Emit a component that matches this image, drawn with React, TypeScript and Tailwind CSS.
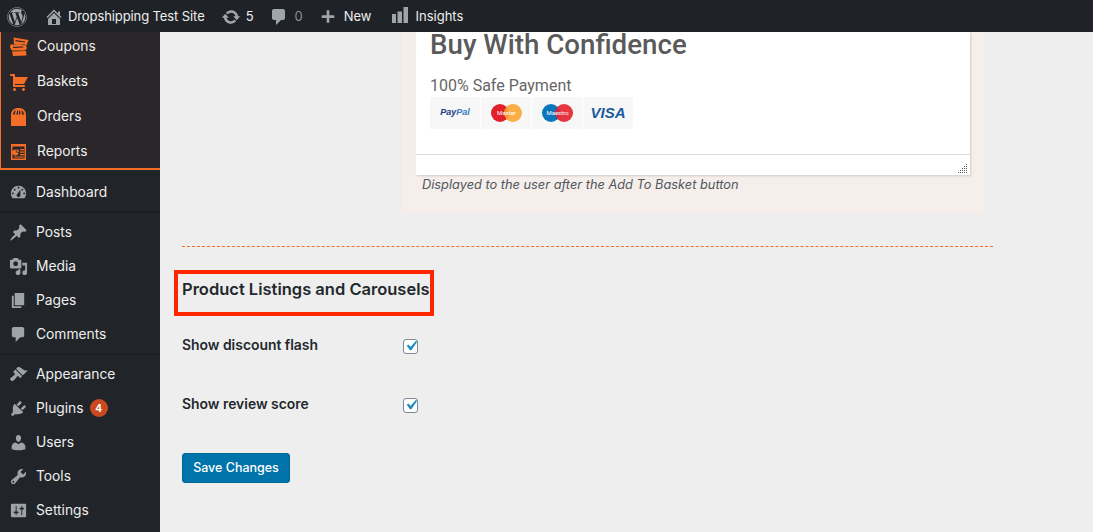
import type { ReactNode } from "react";
import { FaWordpress } from "react-icons/fa";

const paths: Record<string, string> = {
  home: "M16 8.5l1.53 1.53-1.06 1.06L10 4.62l-6.47 6.47-1.06-1.06L10 2.5l4 4v-2h2v4zm-6-2.46l6 5.99V18H4v-5.97zM12 17v-5H8v5h4z",
  update: "M10.2 3.28c3.53 0 6.43 2.61 6.92 6h2.08l-3.5 4-3.5-4h2.32c-.45-1.97-2.21-3.45-4.32-3.45-1.45 0-2.73.71-3.54 1.78L4.95 5.66C6.23 4.2 8.11 3.28 10.2 3.28zm-.4 13.44c-3.52 0-6.43-2.61-6.92-6H.8l3.5-4c1.17 1.33 2.33 2.67 3.5 4H5.48c.45 1.97 2.21 3.45 4.32 3.45 1.45 0 2.73-.71 3.54-1.78l1.71 1.95c-1.28 1.46-3.15 2.38-5.25 2.38z",
  comment: "M5 2h9c1.1 0 2 .9 2 2v7c0 1.1-.9 2-2 2h-2l-5 5v-5H5c-1.1 0-2-.9-2-2V4c0-1.1.9-2 2-2z",
  plus: "M17 8v3h-5.5v5.5h-3V11H3V8h5.5V2.5h3V8z",
  insights: "M2 7h4v9H2zM7.500 4.500h4.500V16H7.500zM13.500 0H18v16h-4.500z",
  cart: "M6 13h9c.55 0 1 .45 1 1s-.45 1-1 1H5c-.55 0-1-.45-1-1V4H2c-.55 0-1-.45-1-1s.45-1 1-1h3c.55 0 1 .45 1 1v2h13l-4 7H6v1zm-.5 3c.83 0 1.5.67 1.5 1.5S6.33 19 5.5 19 4 18.33 4 17.5 4.67 16 5.5 16zm9 0c.83 0 1.5.67 1.5 1.5s-.67 1.5-1.5 1.5-1.5-.67-1.5-1.5.67-1.5 1.5-1.5z",
  dashboard: "M3.76 16h12.48c1.1-1.37 1.76-3.11 1.76-5 0-4.42-3.58-8-8-8s-8 3.58-8 8c0 1.89.66 3.63 1.76 5zM10 4c.55 0 1 .45 1 1s-.45 1-1 1-1-.45-1-1 .45-1 1-1zM6 6c.55 0 1 .45 1 1s-.45 1-1 1-1-.45-1-1 .45-1 1-1zm8 0c.55 0 1 .45 1 1s-.45 1-1 1-1-.45-1-1 .45-1 1-1zm-5.37 5.55L12 7v6c0 1.1-.9 2-2 2s-2-.9-2-2c0-.57.24-1.08.63-1.45zM4 10c.55 0 1 .45 1 1s-.45 1-1 1-1-.45-1-1 .45-1 1-1zm12 0c.55 0 1 .45 1 1s-.45 1-1 1-1-.45-1-1 .45-1 1-1z",
  posts: "M10.44 3.02l1.82-1.82 6.36 6.35-1.83 1.82c-1.05-.68-2.48-.57-3.41.36l-.75.75c-.92.93-1.04 2.35-.35 3.41l-1.83 1.82-2.41-2.41-2.8 2.79c-.42.42-3.38 2.71-3.8 2.29s1.86-3.39 2.28-3.81l2.79-2.79L4.1 9.36l1.83-1.82c1.05.69 2.48.57 3.4-.36l.75-.75c.93-.92 1.05-2.35.36-3.41z",
  media: "M13 11V4c0-.55-.45-1-1-1h-1.67L9 1H5L3.67 3H2c-.55 0-1 .45-1 1v7c0 .55.45 1 1 1h10c.55 0 1-.45 1-1zM7 4.5c1.38 0 2.5 1.12 2.5 2.5S8.38 9.5 7 9.5 4.5 8.38 4.5 7 5.62 4.5 7 4.5zM14 6h5v10.5c0 1.38-1.12 2.5-2.5 2.5S14 17.88 14 16.5s1.12-2.5 2.5-2.5c.17 0 .34.02.5.05V9h-3V6zm-4 8.05V13h2v3.5c0 1.38-1.12 2.5-2.5 2.5S7 17.88 7 16.5 8.12 14 9.5 14c.17 0 .34.02.5.05z",
  pages: "M6 15V2h10v13H6zm-1 1h8v2H3V5h2v11z",
  appearance: "M14.48 11.06L7.41 3.99l1.5-1.5c.5-.56 2.3-.47 3.51.32 1.21.8 1.43 1.28 2.91 2.1 1.18.64 2.45 1.26 4.45.85zm-.71.71L6.7 4.7 4.93 6.47c-.39.39-.39 1.02 0 1.41l1.06 1.06c.39.39.39 1.03 0 1.42-.6.6-1.43 1.11-2.21 1.69-.35.26-.7.53-1.01.84C1.43 13.23.4 14.75 1.8 16.15c1.4 1.41 2.92.38 4.23-.94.31-.31.58-.66.84-1.01.58-.78 1.09-1.61 1.69-2.21.39-.39 1.02-.39 1.41 0l1.06 1.06c.39.39 1.02.39 1.41 0z",
  plugins: "M13.11 4.36L9.87 7.6 8 5.73l3.24-3.24c.35-.34 1.05-.2 1.56.32.52.51.66 1.21.31 1.55zm-8 1.77l.91-1.12 9.01 9.01-1.19.84c-.71.71-2.63 1.16-3.82 1.16H6.14L4.9 17.26c-.59.59-1.54.59-2.12 0-.59-.58-.59-1.53 0-2.12l1.24-1.24v-3.88c0-1.13.4-3.19 1.09-3.89zm7.26 3.97l3.24-3.24c.34-.35 1.04-.21 1.55.31.52.51.66 1.21.31 1.55l-3.24 3.25z",
  users: "M10 9.25c-2.27 0-2.73-3.44-2.73-3.44C7 4.02 7.82 2 9.97 2c2.16 0 2.98 2.02 2.71 3.81 0 0-.41 3.44-2.68 3.44zm0 2.57L12.72 10c2.39 0 4.52 2.33 4.52 4.53v2.49s-3.65 1.13-7.24 1.13c-3.65 0-7.24-1.13-7.24-1.13v-2.49c0-2.25 1.94-4.48 4.47-4.48z",
  tools: "M16.68 9.77c-1.34 1.34-3.3 1.67-4.95.99l-5.41 6.52c-.99.99-2.59.99-3.58 0s-.99-2.59 0-3.57l6.52-5.42c-.68-1.65-.35-3.61.99-4.95 1.28-1.28 3.12-1.62 4.72-1.06l-2.89 2.89 2.82 2.82 2.86-2.87c.53 1.58.18 3.39-1.08 4.65zM3.81 16.21c.4.39 1.04.39 1.43 0 .4-.4.4-1.04 0-1.43-.39-.4-1.03-.4-1.43 0-.39.39-.39 1.03 0 1.43z",
  settings: "M18 16V4c0-.55-.45-1-1-1H3c-.55 0-1 .45-1 1v12c0 .55.45 1 1 1h14c.55 0 1-.45 1-1zM8 11h1c.55 0 1 .45 1 1s-.45 1-1 1H8v1.5c0 .28-.22.5-.5.5s-.5-.22-.5-.5V13H6c-.55 0-1-.45-1-1s.45-1 1-1h1V5.5c0-.28.22-.5.5-.5s.5.22.5.5V11zm5-2h-1c-.55 0-1-.45-1-1s.45-1 1-1h1V5.5c0-.28.22-.5.5-.5s.5.22.5.5V7h1c.55 0 1 .45 1 1s-.45 1-1 1h-1v5.5c0 .28-.22.5-.5.5s-.5-.22-.5-.5V9z",
  coupons: "M4.500 0.500L19.500 3L17.500 8.500L5 7zM6.500 3L16 4.400L15.700 5.400L6.500 4.200zM1.500 7.500L16 7.500L18 11L16 13.500L3 13.500L1 10.500zM4 9.800L14 9.500L14.500 10.500L4 11zM3 14.500L17 14L17.500 18.500L4 19z",
  orders: "M2 8C2 3.500 5 1 9.500 1S17 3.500 17 8V19H2zM4 7.500H6C6 5.500 6.300 4 7 3C5.300 3.700 4.300 5.300 4 7.500zM7.500 7.500H9V2.800C8 3.800 7.500 5.500 7.500 7.500zM10 7.500H11.500C11.500 5.500 11 3.800 10 2.800zM13 7.500H15C14.700 5.300 13.700 3.700 12 3C12.700 4 13 5.500 13 7.500z",
  reports: "M2 2H17V18H2zM3.500 4.500V16.500H15.500V4.500zM6.800 7.500A3 3 0 1 0 9.500 10.500H6.800zM7.500 7.200V9.800H10.200C10.200 8.300 9 7.200 7.500 7.200zM11 7V8.300H15V7zM11 9.500V10.800H15V9.500zM11 12V13.300H15V12zM5 14.500V15.500H15V14.500z",
};

function Icon({ name, className }: { name: string; className: string }) {
  return (
    <svg viewBox="0 0 20 20" className={className} fill="currentColor" fillRule="evenodd">
      <path d={paths[name]} />
    </svg>
  );
}

function MenuItem({ icon, label, orange, badge }: { icon: string; label: string; orange?: boolean; badge?: string }) {
  return (
    <div className={orange ? "flex h-[35px] items-center pl-[8px]" : "flex h-[34px] items-center pl-[9px]"}>
      <Icon name={icon} className={orange ? "h-[20px] w-[20px] text-[#f56e28]" : "h-[19px] w-[19px] text-[#9ea3a8]"} />
      <span className="ml-[8px] text-[13.8px] text-[#eeeeee]">{label}</span>
      {badge && (
        <span className="ml-[6px] flex h-[18px] w-[18px] items-center justify-center rounded-full bg-[#ca4a1f] text-[10px] font-bold text-white">
          {badge}
        </span>
      )}
    </div>
  );
}

function PayTile({ children }: { children: ReactNode }) {
  return <div className="flex h-[32px] w-[50px] items-center justify-center rounded-[2px] bg-[#f7f7f7]">{children}</div>;
}

function Cards({ left, right, label }: { left: string; right: string; label: string }) {
  return (
    <svg width="31" height="18" viewBox="0 0 31 18">
      <circle cx="9" cy="9" r="9" fill={left} />
      <circle cx="22" cy="9" r="9" fill={right} fillOpacity="0.9" />
      <text x="15.500" y="11" textAnchor="middle" fontSize="6" fontFamily="Roboto, sans-serif" fill="#ffffff">
        {label}
      </text>
    </svg>
  );
}

function CheckRow({ label, spacing }: { label: string; spacing: string }) {
  return (
    <div className={`flex items-center ${spacing}`}>
      <span className="w-[221px] text-[13.9px] font-semibold text-[#23282d]">{label}</span>
      <span className="mt-[2px] flex h-[15px] w-[15px] items-center justify-center rounded-[3px] border border-[#7e8993] bg-white">
        <svg viewBox="0 0 20 20" className="h-[20px] w-[20px] shrink-0 text-[#1e8cbe]" fill="currentColor">
          <path d="M14.830 4.890l1.340.940-5.810 8.380H9.020L5.780 9.670l1.340-1.250 2.570 2.400z" />
        </svg>
      </span>
    </div>
  );
}

export default function App() {
  return (
    <div className="flex h-[532px] w-[1093px] flex-col overflow-hidden bg-[#eeeeee] font-['Inter',sans-serif]">
      <header className="flex h-[32px] shrink-0 items-center bg-[#1f2328] pt-[1px] text-[13px] text-[#eeeeee]">
        <FaWordpress className="ml-[7px] h-[20px] w-[20px] text-[#a0a5aa]" />
        <Icon name="home" className="ml-[17px] h-[20px] w-[20px] text-[#a0a5aa]" />
        <span className="ml-[4px] tracking-[-0.1px]">Dropshipping Test Site</span>
        <Icon name="update" className="ml-[16px] h-[20px] w-[20px] text-[#a0a5aa]" />
        <span className="ml-[5px]">5</span>
        <Icon name="comment" className="ml-[15px] h-[20px] w-[20px] text-[#a0a5aa]" />
        <span className="ml-[6px] text-[#8a8f94]">0</span>
        <Icon name="plus" className="ml-[16px] h-[18px] w-[18px] text-[#a0a5aa]" />
        <span className="ml-[7px]">New</span>
        <Icon name="insights" className="ml-[18px] h-[20px] w-[20px] text-[#a0a5aa]" />
        <span className="ml-[6px]">Insights</span>
      </header>

      <div className="flex min-h-0 flex-1">
        <aside className="w-[160px] shrink-0 bg-[#212529]">
          <div className="flow-root h-[138px] overflow-hidden border-b-2 border-l border-[#f56e28] bg-[#2a2629]">
            <div className="-mt-[3px]">
              <MenuItem orange icon="coupons" label="Coupons" />
              <MenuItem orange icon="cart" label="Baskets" />
              <MenuItem orange icon="orders" label="Orders" />
              <MenuItem orange icon="reports" label="Reports" />
            </div>
          </div>
          <div className="mt-[4px] border-t border-[#1b1e22]">
            <MenuItem icon="dashboard" label="Dashboard" />
          </div>
          <div className="mt-[2px] border-t-2 border-[#1b1e22] pt-[2px]">
            <MenuItem icon="posts" label="Posts" />
            <MenuItem icon="media" label="Media" />
            <MenuItem icon="pages" label="Pages" />
            <MenuItem icon="comment" label="Comments" />
          </div>
          <div className="mt-[2px] border-t-2 border-[#1b1e22] pt-[2px]">
            <MenuItem icon="appearance" label="Appearance" />
            <MenuItem icon="plugins" label="Plugins" badge="4" />
            <MenuItem icon="users" label="Users" />
            <MenuItem icon="tools" label="Tools" />
            <MenuItem icon="settings" label="Settings" />
          </div>
        </aside>

        <main className="min-w-0 flex-1 pl-[22px] pr-[100px]">
          <div className="ml-[220px] h-[182px] w-[583px] bg-[#f5eeeb] pl-[14px]">
            <div className="h-[143px] w-[554px] overflow-hidden bg-white shadow-[1px_1px_2px_rgba(0,0,0,0.15)]">
              <div className="flow-root h-[123px] border-b border-[#dddddd] pl-[14px] font-['Roboto',sans-serif] text-[#5a5a5a]">
                <h1 className="mt-[-6px] text-[27.7px] font-medium leading-[38px]">Buy With Confidence</h1>
                <p className="mt-[12px] text-[16px] leading-[20px] text-[#666666]">100% Safe Payment</p>
                <div className="mt-[1px] flex w-fit gap-px">
                  <PayTile>
                    <span className="font-['Liberation_Sans',sans-serif] text-[9px] font-bold italic text-[#253b80]">
                      Pay<span className="text-[#3b7bbf]">Pal</span>
                    </span>
                  </PayTile>
                  <PayTile>
                    <Cards left="#e2202c" right="#f9a533" label="Master" />
                  </PayTile>
                  <PayTile>
                    <Cards left="#0a77bd" right="#e2202c" label="Maestro" />
                  </PayTile>
                  <PayTile>
                    <span className="font-['Liberation_Sans',sans-serif] text-[15px] font-bold italic text-[#1a5a9c]">VISA</span>
                  </PayTile>
                </div>
              </div>
              <div className="flex h-[20px] items-end justify-end pb-[1px] pr-[2px]">
                <svg width="10" height="10" viewBox="0 0 10 10" fill="#555555">
                  <path d="M8 0h1v1H8zM8 2h1v1H8zM6 2h1v1H6zM8 4h1v1H8zM6 4h1v1H6zM4 4h1v1H4zM8 6h1v1H8zM6 6h1v1H6zM4 6h1v1H4zM2 6h1v1H2zM8 8h1v1H8zM6 8h1v1H6zM4 8h1v1H4zM2 8h1v1H2zM0 8h1v1H0z" />
                </svg>
              </div>
            </div>
            <p className="ml-[6px] mt-[1px] text-[12.8px] italic leading-[18px] text-[#50575e]">Displayed to the user after the Add To Basket button</p>
          </div>

          <div className="mt-[32px] border-t border-dashed border-[#f56e28]" />

          <h2 className="-ml-[8px] mt-[23px] flex h-[46px] w-[260px] items-center whitespace-nowrap border-4 border-[#ff2600] pb-[8px] pl-[4px] text-[16.5px] font-semibold text-[#23282d]">
            Product Listings and Carousels
          </h2>

          <CheckRow label="Show discount flash" spacing="mt-[19px]" />
          <CheckRow label="Show review score" spacing="mt-[38px]" />

          <button className="mt-[38px] h-[30px] w-[108px] rounded-[3px] border border-[#006799] bg-[#0073aa] pt-[2px] text-[12.5px] font-medium text-white">
            Save Changes
          </button>
        </main>
      </div>
    </div>
  );
}
